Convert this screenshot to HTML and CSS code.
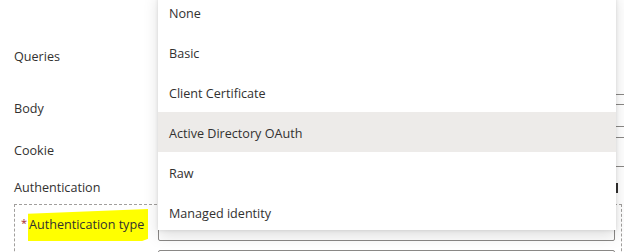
FILE: index.html
```html
<!DOCTYPE html>
<html lang="en">
<head>
    <meta charset="UTF-8">
    <title>HTTP action</title>
    <link rel="stylesheet" href="styles.css">
</head>
<body>
    <div class="form">
        <div class="row row-queries">
            <label class="label">Queries</label>
            <div class="field field-queries"></div>
        </div>
        <div class="row row-body">
            <label class="label">Body</label>
            <div class="field field-body"></div>
        </div>
        <div class="row row-cookie">
            <label class="label">Cookie</label>
            <div class="field field-cookie"></div>
        </div>
        <div class="row row-auth">
            <label class="label">Authentication</label>
            <div class="field field-auth"><span class="bar"></span></div>
        </div>
        <div class="auth-box">
            <div class="row row-type">
                <label class="label label-type"><span class="star">*</span><span class="marker">Authentication type</span></label>
                <div class="field field-type"></div>
            </div>
            <div class="row row-next">
                <div></div>
                <div class="field field-next"></div>
            </div>
        </div>

        <!-- open dropdown for authentication type -->
        <ul class="dropdown">
            <li>None</li>
            <li>Basic</li>
            <li>Client Certificate</li>
            <li class="hover">Active Directory OAuth</li>
            <li>Raw</li>
            <li>Managed identity</li>
        </ul>
    </div>
</body>
</html>
```

FILE: styles.css
```css
body {
    margin: 0;
    background-color: #fff;
    font-family: "Open Sans", "Noto Sans", sans-serif;
    font-size: 12.6px;
    color: #323130;
    overflow: hidden;
}
.form {
    position: relative;
    box-sizing: border-box;
    width: 624px;
    height: 252px;
    padding-left: 14px;
    overflow: hidden;
}
.row {
    display: grid;
    grid-template-columns: 144px 1fr;
}
.label {
    line-height: 20px;
    padding-top: 2px;
}
.row-queries {
    height: 95px;
}
.row-queries .label {
    padding-top: 47px;
}
.field-queries {
    height: 94px;
    border-bottom: 1px solid #8a8886;
}
.row-body {
    margin-top: 2px;
}
.field-body {
    margin-top: 7px;
    height: 21px;
    border-top: 1px solid #8a8886;
    border-bottom: 1px solid #8a8886;
}
.row-cookie {
    margin-top: 10px;
}
.row-cookie .label {
    padding-top: 4px;
}
.field-cookie {
    height: 28px;
    border-top: 1px solid #8a8886;
    border-bottom: 1px solid #8a8886;
}
.row-auth {
    margin-top: 10px;
}
.row-auth .label {
    padding-top: 1px;
}
.field-auth {
    padding-left: 458px;
    padding-top: 6px;
}
.bar {
    display: block;
    width: 2px;
    height: 10px;
    background-color: #323130;
}
.auth-box {
    margin-top: 6px;
    width: 600px;
    height: 60px;
    border: 1px dashed #a19f9d;
    padding-left: 6px;
}
.auth-box .row {
    grid-template-columns: 137px 1fr;
}
.row-type {
    padding-top: 4px;
}
.label-type {
    display: flex;
    align-items: center;
    padding-top: 0;
}
.star {
    color: #a4262c;
    width: 7px;
    font-size: 11px;
    margin-top: -4px;
}
.marker {
    background-color: #ffff00;
    padding: 6px 4px 6px 1px;
    clip-path: polygon(0 15%, 100% 0, 100% 93%, 95% 100%, 0 100%);
}
.field-type {
    height: 30px;
    width: 455px;
    border: 1px solid #8a8886;
    border-radius: 2px;
}
.row-next {
    margin-top: 9px;
}
.field-next {
    height: 30px;
    width: 455px;
    border: 1px solid #8a8886;
    border-radius: 2px;
}
.dropdown {
    position: absolute;
    left: 158px;
    top: -8px;
    width: 458px;
    margin: 0;
    padding: 0;
    list-style: none;
    background-color: #fff;
    box-shadow: 0 6.4px 14.4px 0 rgba(0, 0, 0, 0.13), 0 1.2px 3.6px 0 rgba(0, 0, 0, 0.11);
}
.dropdown li {
    height: 37px;
    padding-top: 3px;
    line-height: 37px;
    padding-left: 11px;
    color: #323130;
}
.dropdown li.hover {
    background-color: #edebe9;
}
.dropdown li:last-child {
    height: 35px;
}
```
